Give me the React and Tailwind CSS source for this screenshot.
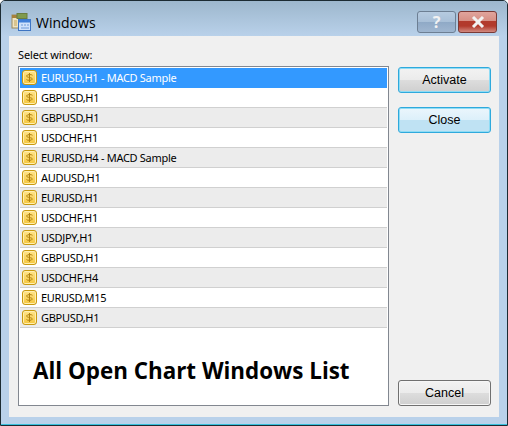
import React from "react";

const rows = [
  "EURUSD,H1 - MACD Sample",
  "GBPUSD,H1",
  "GBPUSD,H1",
  "USDCHF,H1",
  "EURUSD,H4 - MACD Sample",
  "AUDUSD,H1",
  "EURUSD,H1",
  "USDCHF,H1",
  "USDJPY,H1",
  "GBPUSD,H1",
  "USDCHF,H4",
  "EURUSD,M15",
  "GBPUSD,H1",
];

function DollarIcon() {
  return (
    <span className="w-[15px] h-[15px] rounded-[3px] border border-[#c8990f] bg-gradient-to-b from-[#ffe58a] to-[#f5c636] shadow-[inset_0_0_0_1px_#ffeeb0] flex items-center justify-center shrink-0">
      <svg width="11" height="11" viewBox="0 0 11 11" fill="none" stroke="#b0820f" strokeWidth="1">
        <path d="M8.5 3.3C7.8 2.3 2.8 2.2 2.6 3.9c-.2 1.9 5.9 1.3 5.7 3.2-.2 1.7-5.1 1.5-5.8.4M5.5 1v9" />
      </svg>
    </span>
  );
}

function WindowsIcon() {
  return (
    <svg width="20" height="18" viewBox="0 0 20 18" className="shrink-0">
      <rect x="1" y="2" width="13" height="13" fill="#efe3c0" stroke="#9c8a5c" />
      <rect x="1" y="2" width="13" height="3" fill="#a8813a" />
      <rect x="6" y="0.5" width="10" height="5" fill="#7f9a4e" stroke="#6a7d40" />
      <rect x="3" y="7" width="3" height="6" fill="#d9c48e" />
      <rect x="7.5" y="6.5" width="12" height="11" fill="#cfe2fb" stroke="#3d74c2" />
      <rect x="7.5" y="6.5" width="12" height="3" fill="#3f7fd8" />
      <path d="M10 12h2M13 12h2M16 12h2M10 15h8" stroke="#6f9ad8" />
    </svg>
  );
}

function DialogButton({ children, focused, light }) {
  return (
    <button
      type="button"
      className={`w-[93px] h-[26px] pt-px rounded-[3px] border text-[12.5px] text-black font-['Liberation_Sans',sans-serif] ${focused ? "border-[#2fa9dc] shadow-[inset_0_0_0_1px_#8fdcf5]" : "border-[#707070] shadow-[inset_0_0_0_1px_#f6f6f6]"} ${light ? "bg-[linear-gradient(#ebf6fc_0%,#dcf0fa_50%,#bfe2f3_50%,#bfe2f3_100%)]" : "bg-[linear-gradient(#f2f2f2_0%,#ebebeb_50%,#dddddd_50%,#cfcfcf_100%)]"}`}
    >
      {children}
    </button>
  );
}

export default function App() {
  return (
    <div className="w-[508px] h-[426px] border border-[#1c2b33] rounded-t-[5px] bg-[#b9d1ea] shadow-[inset_0_-1px_0_#37c0dc] flex flex-col overflow-hidden font-['Noto_Sans','Liberation_Sans',sans-serif]">
      <div className="h-[35px] shrink-0 flex items-center pl-[10px] pr-[10px] pt-[7px] bg-gradient-to-b from-[#9db7cd] to-[#b9d1ea]">
        <WindowsIcon />
        <span className="ml-[5px] text-[14px] text-black font-['Open_Sans',sans-serif]">Windows</span>
        <div className="ml-auto flex gap-[2px] self-start mt-[3px]">
          <button type="button" className="w-[39px] h-[22px] rounded-[3px] border border-[#6d7f93] bg-[linear-gradient(#b6cbe0_0%,#a8bfd7_50%,#8fa9c6_50%,#9fb6d0_100%)] text-[16px] leading-none font-bold text-[#f2f2f2]">
            ?
          </button>
          <button type="button" className="w-[39px] h-[22px] rounded-[3px] border border-[#7a3a36] bg-[linear-gradient(#e0a49c_0%,#d68f84_45%,#b23a2c_45%,#b23a2c_70%,#d28a80_100%)] flex items-center justify-center">
            <svg width="14" height="12" viewBox="0 0 14 12" stroke="#f2f2f2" strokeWidth="3">
              <path d="M2 1l10 10M12 1L2 11" />
            </svg>
          </button>
        </div>
      </div>

      <div className="mx-[8px] h-[381px] bg-[#f0f0f0] pl-[9px] pr-[8px] pt-[10px] flex gap-[9px]">
        <div className="w-[371px] flex flex-col">
          <div className="h-[20px] text-[11px] leading-[18px] tracking-[-0.15px] text-black">Select window:</div>
          <div className="relative h-[340px] border border-[#828790] bg-white p-px">
            {rows.map((r, i) => (
              <div
                key={i}
                className={`h-[20px] flex items-center pl-[2px] gap-[4px] text-[11px] tracking-[-0.3px] border-b ${i === 0 ? "bg-[#3399ff] text-white border-[#3399ff]" : i % 2 === 0 ? "bg-[#ececec] text-black border-[#d0d0d0]" : "bg-white text-black border-[#d0d0d0]"}`}
              >
                <DollarIcon />
                <span className="pt-px">{r}</span>
              </div>
            ))}
            <div className="absolute left-[14px] top-[288px] text-[22.4px] leading-[32px] font-bold text-black font-['Open_Sans',sans-serif]">
              All Open Chart Windows List
            </div>
          </div>
        </div>
        <div className="flex flex-col pt-[21px] h-[360px]">
          <DialogButton focused>Activate</DialogButton>
          <div className="h-[14px]" />
          <DialogButton focused light>Close</DialogButton>
          <div className="mt-auto">
            <DialogButton>Cancel</DialogButton>
          </div>
        </div>
      </div>
    </div>
  );
}
